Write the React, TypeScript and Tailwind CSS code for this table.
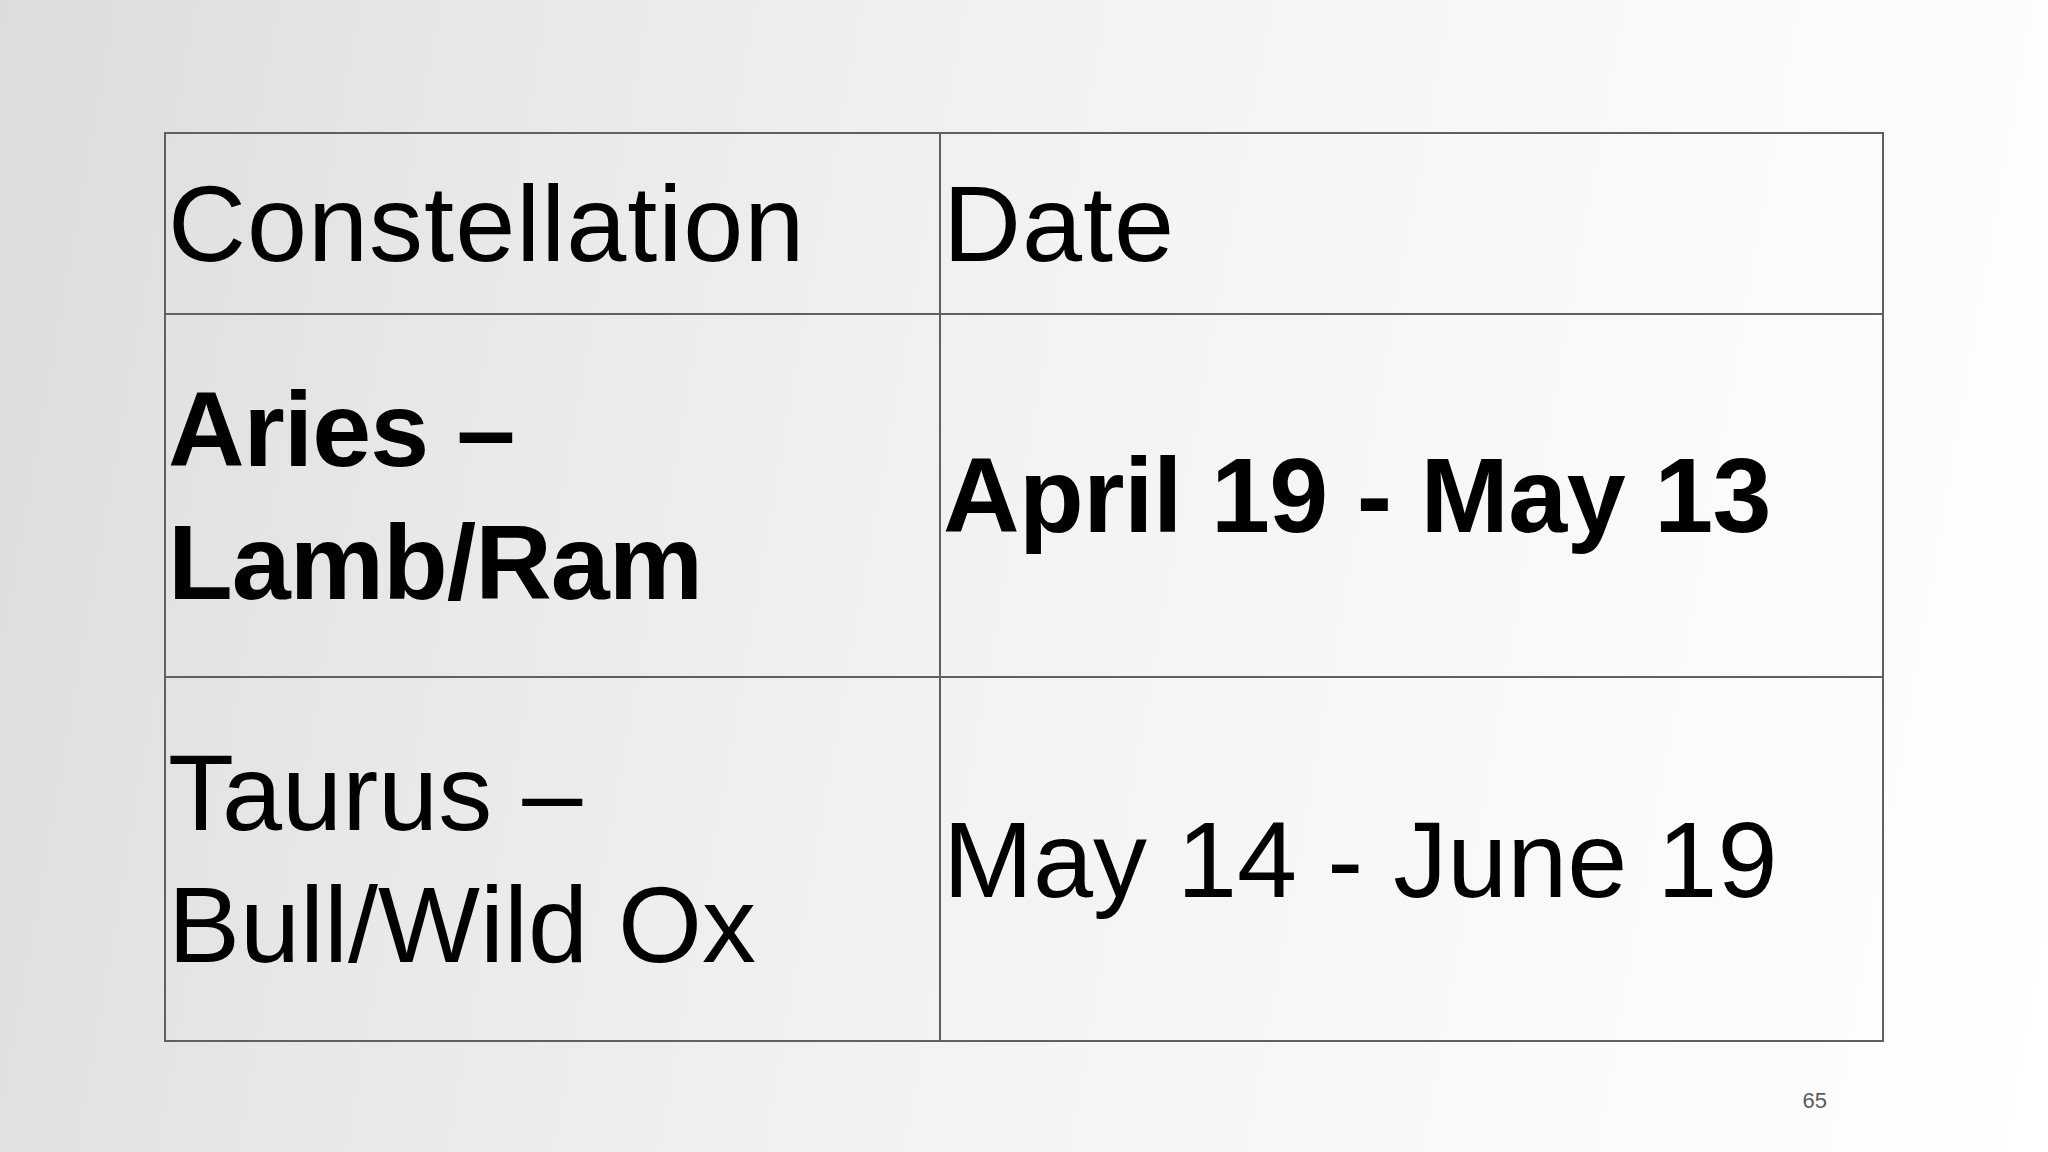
const rows = [
  { name: ["Aries –", "Lamb/Ram"], date: "April 19 - May 13", bold: true, h: "h-[363px]" },
  { name: ["Taurus –", "Bull/Wild Ox"], date: "May 14 - June 19", bold: false, h: "h-[364px]" },
];

export default function App() {
  return (
    <div className="w-[2048px] h-[1152px] overflow-hidden bg-[linear-gradient(100deg,#dcdcdc_0%,#e9e9e9_25%,#f3f3f3_50%,#f9f9f9_75%,#ffffff_100%)] font-['Liberation_Sans',Arial,sans-serif] text-black">
      <div className="pt-[132px] pl-[164px]">
        <table className="border-collapse">
          <tbody>
            <tr className="h-[181px]">
              <td className="w-[775px] border-2 border-[#606060] px-[2px] align-middle text-[108px] leading-[1.25] tracking-[1px]">
                Constellation
              </td>
              <td className="w-[943px] border-2 border-[#606060] px-[2px] align-middle text-[108px] leading-[1.25] tracking-[1px]">
                Date
              </td>
            </tr>
            {rows.map((r) => (
              <tr key={r.date} className={r.h}>
                <td
                  className={
                    r.bold
                      ? "border-2 border-[#606060] px-[2px] align-middle text-[106px] leading-[1.25] font-bold tracking-[-1px]"
                      : "border-2 border-[#606060] px-[2px] align-middle text-[108px] leading-[1.22]"
                  }
                >
                  {r.name.map((l) => (
                    <div key={l}>{l}</div>
                  ))}
                </td>
                <td
                  className={
                    r.bold
                      ? "border-2 border-[#606060] px-[2px] align-middle text-[106px] leading-[1.25] font-bold tracking-[-0.5px]"
                      : "border-2 border-[#606060] px-[2px] align-middle text-[108px] leading-[1.25]"
                  }
                >
                  {r.date}
                </td>
              </tr>
            ))}
          </tbody>
        </table>
      </div>
      <div className="flex justify-end pr-[221px] pt-[42px]">
        <span className="text-[22px] text-[#5a5a5a]">65</span>
      </div>
    </div>
  );
}
